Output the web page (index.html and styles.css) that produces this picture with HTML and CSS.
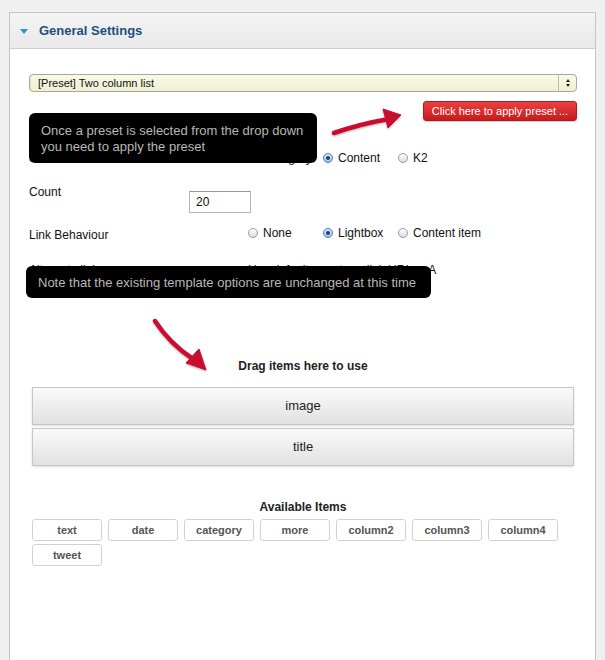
FILE: index.html
```html
<!DOCTYPE html>
<html>
<head>
<meta charset="utf-8">
<link rel="stylesheet" href="styles.css">
</head>
<body>
<div class="panel">
  <div class="panel-head">
    <span class="caret"></span>
    <span class="panel-title">General Settings</span>
  </div>
  <div class="panel-body">
    <div class="select">
      <span class="select-text">[Preset] Two column list</span>
      <span class="select-stepper"><span class="up"></span><span class="down"></span></span>
    </div>
    <div class="apply-row">
      <button class="apply-btn">Click here to apply preset ...</button>
    </div>

    <div class="row row-source">
      <div class="label">Source</div>
      <div class="radios">
        <label class="radio"><span class="dot"></span>Category</label>
        <label class="radio"><span class="dot on"></span>Content</label>
        <label class="radio"><span class="dot"></span>K2</label>
      </div>
    </div>

    <div class="row row-count">
      <div class="label">Count</div>
      <div class="field"><span class="input">20</span></div>
    </div>

    <div class="row row-link">
      <div class="label">Link Behaviour</div>
      <div class="radios">
        <label class="radio"><span class="dot"></span>None</label>
        <label class="radio"><span class="dot on"></span>Lightbox</label>
        <label class="radio"><span class="dot"></span>Content item</label>
      </div>
    </div>

    <div class="row row-alt">
      <div class="label">Alternate link</div>
      <div class="alt-text">Use default or enter a link URL or A</div>
    </div>

    <div class="section-title drag-title">Drag items here to use</div>
    <div class="drop">
      <div class="drop-item">image</div>
      <div class="drop-item">title</div>
    </div>

    <div class="section-title avail-title">Available Items</div>
    <div class="chips">
      <span class="chip">text</span>
      <span class="chip">date</span>
      <span class="chip">category</span>
      <span class="chip">more</span>
      <span class="chip">column2</span>
      <span class="chip">column3</span>
      <span class="chip">column4</span>
      <span class="chip">tweet</span>
    </div>
  </div>
</div>

<div class="tip tip-one">Once a preset is selected from the drop down<br>you need to apply the preset</div>
<div class="tip tip-two">Note that the existing template options are unchanged at this time</div>

<svg class="arrows" width="605" height="660" viewBox="0 0 605 660">
  <defs>
    <filter id="sh" x="-20%" y="-20%" width="140%" height="140%">
      <feDropShadow dx="0" dy="1" stdDeviation="1" flood-color="#000" flood-opacity="0.3"/>
    </filter>
  </defs>
  <g filter="url(#sh)" fill="#c8102e" stroke="#c8102e">
    <path d="M334 133 Q 360 124 389 119" fill="none" stroke-width="4.5" stroke-linecap="round"/>
    <polygon points="383,109 401,115 388,128" stroke-width="1" stroke-linejoin="round"/>
    <path d="M155 321 Q 170 344 193 359" fill="none" stroke-width="4.5" stroke-linecap="round"/>
    <polygon points="186,363 199,349 206,370" stroke-width="1" stroke-linejoin="round"/>
  </g>
</svg>
</body>
</html>
```

FILE: styles.css
```css
* { box-sizing: border-box; }

body {
  margin: 0;
  background: #f0f0f0;
  font-family: "Liberation Sans", Arial, sans-serif;
  color: #111;
  position: relative;
  width: 605px;
  height: 660px;
  overflow: hidden;
}

.panel {
  margin: 12px 0 0 9px;
  width: 587px;
  min-height: 700px;
  border: 1px solid #c4c4c4;
  background: #fff;
}

.panel-head {
  height: 36px;
  border-bottom: 1px solid #cfcfcf;
  background: linear-gradient(#f4f4f4, #e9e9e9);
  display: flex;
  align-items: center;
  padding-left: 10px;
}

.caret {
  width: 0;
  height: 0;
  border-left: 4.5px solid transparent;
  border-right: 4.5px solid transparent;
  border-top: 5px solid #2f8fcf;
  margin-top: 1px;
  margin-right: 11px;
}

.panel-title {
  font-size: 13px;
  font-weight: bold;
  color: #1d4e7f;
}

.panel-body {
  padding: 25px 18px 40px 19px;
}

.select {
  height: 18px;
  border: 1px solid #a9a9a0;
  border-radius: 4px;
  background: linear-gradient(#fafae8, #efefd2);
  display: flex;
  align-items: center;
  justify-content: space-between;
  box-shadow: inset 1px 0 0 #e0e0c8;
}

.select-text {
  font-size: 11px;
  padding-left: 8px;
  color: #111;
}

.select-stepper {
  width: 18px;
  height: 16px;
  border-left: 1px solid #bdbdae;
  display: flex;
  flex-direction: column;
  align-items: center;
  justify-content: center;
  gap: 2px;
}

.up, .down {
  width: 0;
  height: 0;
  border-left: 2.5px solid transparent;
  border-right: 2.5px solid transparent;
}
.up { border-bottom: 3px solid #222; }
.down { border-top: 3px solid #222; }

.apply-row {
  display: flex;
  justify-content: flex-end;
  margin-top: 9px;
}

.apply-btn {
  width: 154px;
  height: 20px;
  border: 1px solid #b3191c;
  border-radius: 3px;
  background: linear-gradient(#ea4040, #c91b1e);
  color: #fff;
  font-family: "Liberation Sans", Arial, sans-serif;
  font-size: 11px;
  padding: 0;
  line-height: 18px;
  box-shadow: 0 1px 1px rgba(0,0,0,0.2);
}

.row {
  display: grid;
  grid-template-columns: 160px 1fr;
  align-items: start;
  font-size: 12px;
  line-height: 16px;
}

.row-source { margin-top: 29px; }
.row-count { margin-top: 18px; }
.row-link { margin-top: 14px; }
.row-alt { margin-top: 19px; }

.label { color: #111; }

.radios {
  display: flex;
  margin-left: 59px;
}

.row-link .radios { margin-top: -2px; }

.radio {
  width: 75px;
  display: flex;
  align-items: center;
  white-space: nowrap;
  color: #111;
}

.dot {
  width: 10px;
  height: 10px;
  border-radius: 50%;
  border: 1px solid #9a9a9a;
  background: linear-gradient(#ffffff, #dcdcdc);
  margin-right: 5px;
  flex: none;
  display: flex;
  align-items: center;
  justify-content: center;
}

.dot.on {
  border-color: #5277a8;
  background: linear-gradient(#d6e6fa, #9fc2ec);
}

.dot.on::after {
  content: "";
  width: 4px;
  height: 4px;
  border-radius: 50%;
  background: #1f3f72;
}

.field { padding-top: 7px; }

.input {
  display: block;
  width: 62px;
  height: 22px;
  border: 1px solid #b5b5b5;
  border-top-color: #9a9a9a;
  padding-left: 6px;
  line-height: 20px;
  font-size: 12px;
  color: #111;
}

.alt-text {
  margin-left: 59px;
  white-space: nowrap;
}

.section-title {
  text-align: center;
  font-size: 12px;
  font-weight: bold;
  line-height: 16px;
  color: #222;
}

.drag-title { margin-top: 80px; }
.avail-title { margin-top: 33px; }

.drop {
  margin: 13px 3px 0 3px;
  display: flex;
  flex-direction: column;
  gap: 3px;
}

.drop-item {
  height: 38px;
  border: 1px solid #c6c6c6;
  background: linear-gradient(#fafafa, #e1e1e1);
  box-shadow: 0 1px 2px rgba(0,0,0,0.15);
  text-align: center;
  line-height: 36px;
  font-size: 13px;
  color: #222;
}

.chips {
  margin: 4px 0 0 3px;
  display: flex;
  flex-wrap: wrap;
  column-gap: 6px;
  row-gap: 3px;
}

.chip {
  width: 70px;
  height: 22px;
  border: 1px solid #d2d2d2;
  border-radius: 3px;
  background: #fff;
  text-align: center;
  line-height: 20px;
  font-size: 11px;
  font-weight: bold;
  color: #555;
}

.tip {
  position: absolute;
  background: #000;
  color: #b8b8b8;
  border-radius: 6px;
  font-size: 13px;
  line-height: 16px;
  padding-left: 12px;
  white-space: nowrap;
}

.tip-one {
  left: 29px;
  top: 113px;
  width: 288px;
  height: 50px;
  padding-top: 10px;
}

.tip-two {
  left: 26px;
  top: 266px;
  width: 405px;
  height: 32px;
  padding-top: 9px;
}

.arrows {
  position: absolute;
  left: 0;
  top: 0;
  pointer-events: none;
}
```
